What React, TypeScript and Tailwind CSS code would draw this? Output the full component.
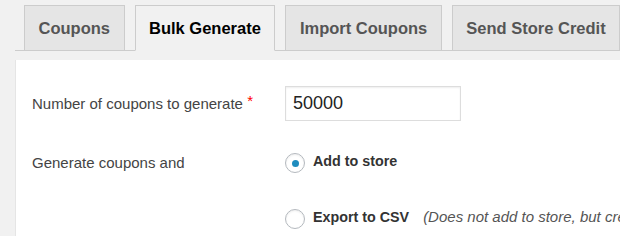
import React from 'react';

const tabs = [
  { label: 'Coupons', active: false },
  { label: 'Bulk Generate', active: true },
  { label: 'Import Coupons', active: false },
  { label: 'Send Store Credit', active: false },
];

function Radio({ checked }: { checked?: boolean }) {
  return (
    <span className="flex h-[20px] w-[20px] shrink-0 items-center justify-center rounded-full border border-[#b4b9be] bg-white shadow-[inset_0_1px_2px_rgba(0,0,0,0.07)]">
      {checked && <span className="h-[7px] w-[7px] rounded-full bg-[#1e8cbe]" />}
    </span>
  );
}

export default function App() {
  return (
    <div className="h-[236px] w-[620px] overflow-hidden bg-[#f1f1f1] font-['Liberation_Sans',Arial,sans-serif]">
      {/* Tabs */}
      <div className="ml-[15px] flex gap-[10px] border-b border-[#ccc] pl-[9px] pt-[5px]">
        {tabs.map(t => (
          <div
            key={t.label}
            className={`-mb-px flex h-[46px] shrink-0 items-center whitespace-nowrap border border-[#ccc] px-[13.5px] text-[16.5px] font-bold ${
              t.active ? 'border-b-[#f1f1f1] bg-[#f1f1f1] text-black' : 'bg-[#e5e5e5] text-[#555]'
            }`}
          >
            {t.label}
          </div>
        ))}
      </div>

      {/* Panel */}
      <div className="ml-[15px] mt-[9px] h-[200px] border-l border-[#e5e5e5] bg-white pl-[16px] pt-[26px] text-[15px] text-[#444]">
        <div className="flex">
          <div className="w-[253px] shrink-0 pt-[5px] leading-[20px]">
            Number of coupons to generate <span className="align-[3px] text-[#f00]">*</span>
          </div>
          <div className="flex h-[35px] w-[176px] items-center border border-[#ddd] px-[7px] text-[18px] text-[#222] shadow-[inset_0_1px_2px_rgba(0,0,0,0.07)]">
            50000
          </div>
        </div>

        <div className="mt-[32px] flex items-center">
          <div className="w-[253px] shrink-0 leading-[20px]">Generate coupons and</div>
          <div className="flex items-center gap-[8px]">
            <Radio checked />
            <span className="-mt-[2px] text-[14.3px] font-bold text-[#333]">Add to store</span>
          </div>
        </div>

        <div className="mt-[36px] flex items-center pl-[253px]">
          <div className="flex items-center gap-[8px] whitespace-nowrap">
            <Radio />
            <span className="-mt-[3px] text-[14.3px] font-bold text-[#333]">Export to CSV</span>
            <span className="-mt-[3px] ml-[6px] italic text-[#555]">
              (Does not add to store, but creates a .csv file)
            </span>
          </div>
        </div>
      </div>
    </div>
  );
}
